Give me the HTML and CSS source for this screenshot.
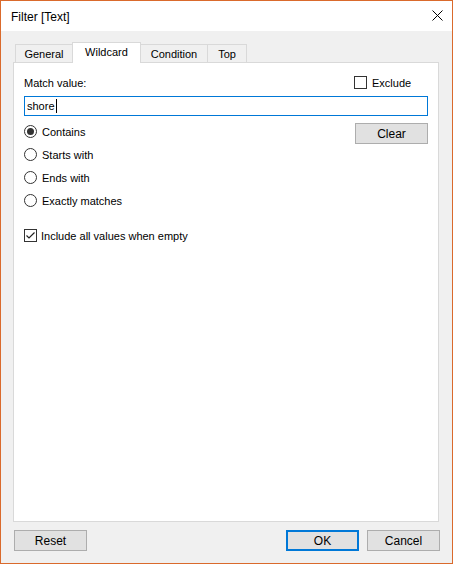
FILE: index.html
```html
<!DOCTYPE html>
<html>
<head>
<meta charset="utf-8">
<link rel="stylesheet" href="styles.css">
</head>
<body>
<div class="window">
  <div class="titlebar">
    <span class="title">Filter [Text]</span>
    <svg class="close" width="11" height="11" viewBox="0 0 11 11"><path d="M0.5 0.5 L10.5 10.5 M10.5 0.5 L0.5 10.5" stroke="#000" stroke-width="1" fill="none"/></svg>
  </div>
  <div class="client">
    <div class="tabs">
      <div class="tab tab-general">General</div>
      <div class="tab tab-wild selected">Wildcard</div>
      <div class="tab tab-cond">Condition</div>
      <div class="tab tab-top">Top</div>
    </div>
    <div class="panel">
      <div class="row-head">
        <span class="label">Match value:</span>
        <label class="check exclude"><span class="box"></span><span>Exclude</span></label>
      </div>
      <div class="input"><span>shore</span><span class="caret"></span></div>
      <div class="options">
        <div class="radios">
          <div class="radio on"><span class="circle"><span class="dot"></span></span><span>Contains</span></div>
          <div class="radio"><span class="circle"></span><span>Starts with</span></div>
          <div class="radio"><span class="circle"></span><span>Ends with</span></div>
          <div class="radio"><span class="circle"></span><span>Exactly matches</span></div>
        </div>
        <div class="btn clear">Clear</div>
      </div>
      <label class="check include"><span class="box"><svg width="11" height="11" viewBox="0 0 11 11"><path d="M1.5 5.5 L4 8 L9.5 2.5" stroke="#222" stroke-width="1.2" fill="none"/></svg></span><span>Include all values when empty</span></label>
    </div>
    <div class="footer">
      <div class="btn">Reset</div>
      <div class="spacer"></div>
      <div class="btn default">OK</div>
      <div class="btn">Cancel</div>
    </div>
  </div>
</div>
</body>
</html>
```
FILE: styles.css
```css
html, body {
  margin: 0;
  padding: 0;
  background: #ffffff;
}
body {
  font-family: "Liberation Sans", Arial, sans-serif;
  font-size: 11px;
  color: #000;
  width: 454px;
  height: 566px;
  overflow: hidden;
}
.window {
  width: 451px;
  height: 562px;
  border: 1px solid #da6a2c;
  display: flex;
  flex-direction: column;
  background: #f0f0f0;
}
.titlebar {
  height: 30px;
  flex: none;
  background: #fff;
  display: flex;
  align-items: center;
  justify-content: space-between;
  padding: 0 9px 0 10px;
}
.title {
  font-size: 12px;
  margin-top: 1px;
}
.close {
  display: block;
  margin-top: -1px;
}
.client {
  flex: 1;
  display: flex;
  flex-direction: column;
  padding: 11px 0 0 12px;
}
.tabs {
  display: flex;
  align-items: flex-end;
  height: 20px;
  margin-left: 2px;
}
.tab {
  box-sizing: border-box;
  height: 18px;
  border: 1px solid #d9d9d9;
  border-bottom: none;
  background: #f0f0f0;
  display: flex;
  align-items: center;
  justify-content: center;
  margin-left: -1px;
  padding-top: 1px;
}
.tab:first-child { margin-left: 0; }
.tab-general { width: 58px; }
.tab-wild { width: 69px; }
.tab-cond { width: 68px; }
.tab-top { width: 40px; }
.tab.selected {
  height: 21px;
  margin-bottom: -1px;
  background: #fff;
  position: relative;
  z-index: 1;
  padding-top: 0;
  padding-bottom: 2px;
}
.panel {
  box-sizing: border-box;
  width: 426px;
  height: 460px;
  border: 1px solid #d9d9d9;
  background: #fff;
  padding: 13px 10px 0 10px;
}
.row-head {
  display: flex;
  align-items: center;
  justify-content: space-between;
  height: 13px;
}
.check {
  display: flex;
  align-items: center;
  gap: 5px;
}
.exclude {
  width: 74px;
}
.box {
  box-sizing: border-box;
  width: 13px;
  height: 13px;
  border: 1px solid #333;
  background: #fff;
  display: flex;
  align-items: center;
  justify-content: center;
  flex: none;
}
.box svg { display: block; }
.input {
  box-sizing: border-box;
  margin-top: 7px;
  height: 20px;
  border: 1px solid #0078d7;
  display: flex;
  align-items: center;
  padding-left: 2px;
}
.caret {
  width: 1px;
  height: 14px;
  background: #000;
  margin-left: 1px;
}
.options {
  display: flex;
  justify-content: space-between;
  margin-top: 4px;
}
.radio {
  height: 23px;
  display: flex;
  align-items: center;
  gap: 5px;
}
.circle {
  box-sizing: border-box;
  width: 13px;
  height: 13px;
  border: 1px solid #333;
  border-radius: 50%;
  display: flex;
  align-items: center;
  justify-content: center;
}
.dot {
  width: 7px;
  height: 7px;
  border-radius: 50%;
  background: #333;
}
.btn {
  box-sizing: border-box;
  width: 73px;
  height: 21px;
  background: #e1e1e1;
  border: 1px solid #adadad;
  display: flex;
  align-items: center;
  justify-content: center;
  font-size: 12px;
}
.clear {
  margin-top: 3px;
}
.btn.default {
  border: 2px solid #0078d7;
}
.include {
  margin-top: 17px;
  gap: 4px;
}
.footer {
  display: flex;
  margin-top: 8px;
  margin-left: 1px;
  width: 426px;
  gap: 8px;
}
.spacer { flex: 1; }
```
